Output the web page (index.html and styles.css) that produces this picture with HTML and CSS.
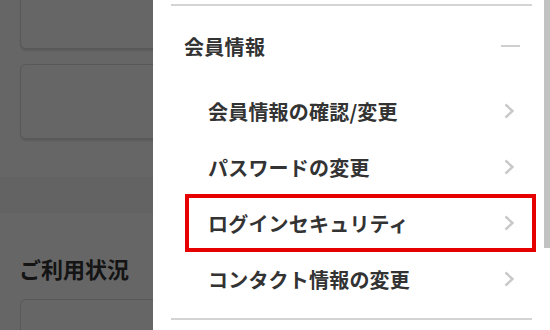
FILE: index.html
```html
<!DOCTYPE html>
<html lang="ja">
<head>
<meta charset="utf-8">
<link rel="stylesheet" href="styles.css">
</head>
<body>
<div class="page">
  <div class="card card-1"></div>
  <div class="card card-2"></div>
  <div class="band"></div>
  <h2 class="usage-title">ご利用状況</h2>
  <div class="card card-3"></div>
</div>
<div class="overlay"></div>
<aside class="drawer">
  <section class="section">
    <div class="section-head">
      <span class="section-title">会員情報</span>
      <span class="minus"></span>
    </div>
    <ul class="menu">
      <li class="menu-item"><span>会員情報の確認/変更</span><svg class="chev" viewBox="0 0 10 16" width="10" height="16"><polyline points="1.5,1.5 8.5,8 1.5,14.5"/></svg></li>
      <li class="menu-item"><span>パスワードの変更</span><svg class="chev" viewBox="0 0 10 16" width="10" height="16"><polyline points="1.5,1.5 8.5,8 1.5,14.5"/></svg></li>
      <li class="menu-item highlighted"><span>ログインセキュリティ</span><svg class="chev" viewBox="0 0 10 16" width="10" height="16"><polyline points="1.5,1.5 8.5,8 1.5,14.5"/></svg></li>
      <li class="menu-item"><span>コンタクト情報の変更</span><svg class="chev" viewBox="0 0 10 16" width="10" height="16"><polyline points="1.5,1.5 8.5,8 1.5,14.5"/></svg></li>
    </ul>
  </section>
  <div class="scrollbar"></div>
</aside>
</body>
</html>
```

FILE: styles.css
```css
html, body {
  margin: 0;
  padding: 0;
  width: 550px;
  height: 330px;
  overflow: hidden;
  background: #fff;
  font-family: "Noto Sans CJK JP", "Noto Sans", sans-serif;
}

.page {
  display: flex;
  flex-direction: column;
  padding-left: 20px;
  height: 330px;
  box-sizing: border-box;
}

.card {
  background: #fff;
  border: 1px solid #dcdcdc;
  border-radius: 6px;
  box-shadow: 0 2px 2px rgba(0, 0, 0, 0.12);
  box-sizing: border-box;
}

.card-1 {
  margin-top: -12px;
  height: 61px;
}

.card-2 {
  margin-top: 15px;
  height: 75px;
}

.band {
  margin-top: 38px;
  margin-left: -20px;
  height: 36px;
  background: #f7f7f7;
}

.usage-title {
  margin: 40px 0 0 -1px;
  font-size: 22px;
  line-height: 30px;
  font-weight: 700;
  color: #333;
}

.card-3 {
  margin-top: 16px;
  flex: 1;
  border-bottom: none;
  border-radius: 6px 6px 0 0;
  box-shadow: none;
}

.overlay {
  position: absolute;
  inset: 0;
  background: rgba(0, 0, 0, 0.6);
}

.drawer {
  position: absolute;
  top: 0;
  left: 153px;
  width: 397px;
  height: 330px;
  background: #fff;
  padding: 4px 18px 0 18px;
  box-sizing: border-box;
}

.section {
  border-top: 2px solid #d4d4d4;
  border-bottom: 2px solid #d4d4d4;
}

.section-head {
  height: 77px;
  padding: 3px 12px 0 13px;
  box-sizing: border-box;
  display: flex;
  align-items: center;
  justify-content: space-between;
}

.section-title {
  font-size: 20px;
  font-weight: 700;
  color: #333;
  letter-spacing: 0.3px;
}

.minus {
  width: 19px;
  height: 2px;
  background: #cfcfcf;
}

.menu {
  list-style: none;
  margin: 0;
  padding: 0 0 11px 0;
}

.menu-item {
  position: relative;
  height: 56px;
  padding: 0 18px 0 37px;
  display: flex;
  align-items: center;
  justify-content: space-between;
  font-size: 20px;
  font-weight: 700;
  color: #333;
  letter-spacing: 0.2px;
}

.chev {
  fill: none;
  stroke: #c8c8c8;
  stroke-width: 2.4;
}

.highlighted::after {
  content: "";
  position: absolute;
  left: 14px;
  right: -4px;
  top: -1px;
  bottom: -1px;
  border: 4px solid #e60000;
}

.scrollbar {
  position: absolute;
  top: 0;
  right: 0;
  width: 6px;
  height: 248px;
  background: #c2c2c2;
}
```
